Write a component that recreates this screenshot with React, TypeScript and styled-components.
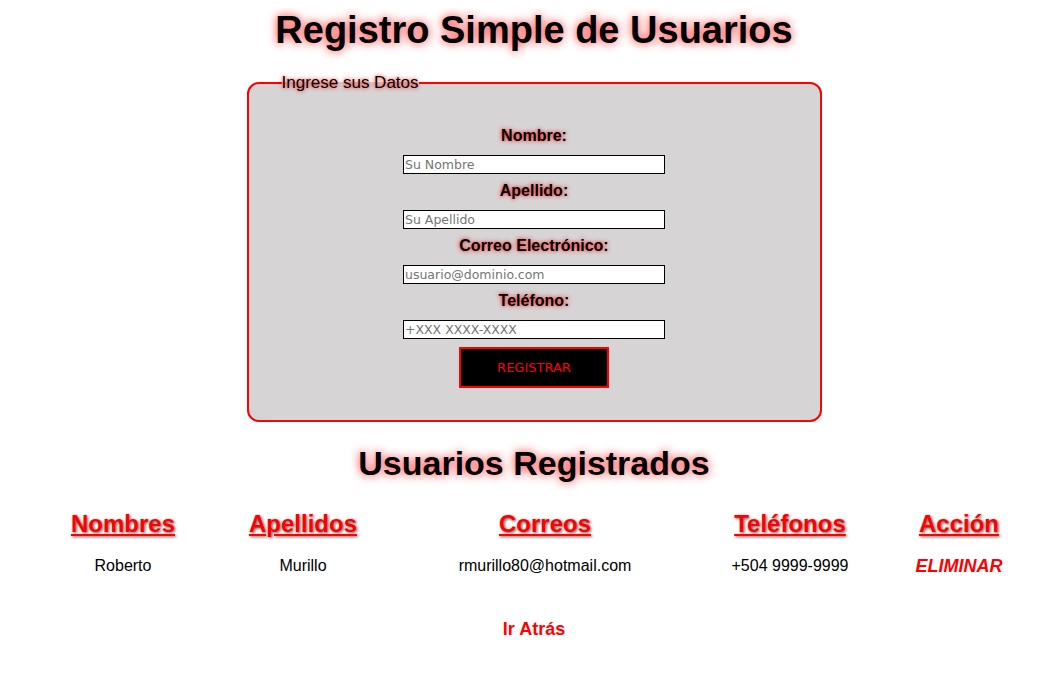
import React from "react";
import styled, { createGlobalStyle } from "styled-components";

const Global = createGlobalStyle`
  html, body { background: #fff; }
  body {
    margin: 8px;
    font-family: "Liberation Sans", Arial, sans-serif;
    color: #000;
  }
`;

const Page = styled.div`
  padding-left: 13px;
  display: flex;
  flex-direction: column;
  align-items: stretch;
`;

const Title = styled.h1<{ $size: number }>`
  margin: 0;
  text-align: center;
  font-size: ${(p) => p.$size}px;
  line-height: ${(p) => Math.round(p.$size * 1.16)}px;
  font-weight: bold;
  text-shadow: 0 0 10px rgba(255, 0, 0, 0.85);
`;

const Fieldset = styled.fieldset`
  box-sizing: border-box;
  width: 575px;
  margin: 21px auto 0;
  padding: 34px 0 32px;
  border: 2px solid #f00;
  border-radius: 12px;
  background: #d6d4d5;
`;

const Legend = styled.legend`
  margin-left: 33px;
  padding: 0;
  font-size: 17px;
  line-height: 20px;
  text-shadow: 0 0 4px #f00;
`;

const Form = styled.form`
  display: flex;
  flex-direction: column;
  align-items: center;
`;

const Label = styled.label`
  display: block;
  font-size: 16px;
  line-height: 18px;
  font-weight: bold;
  margin-bottom: 10px;
  text-shadow: 0 0 4px #f00;
`;

const Input = styled.input`
  box-sizing: border-box;
  width: 262px;
  height: 19px;
  margin: 0 0 8px;
  padding: 0 1px;
  border: 1px solid #000;
  background: #fff;
  font-family: "DejaVu Sans", Verdana, sans-serif;
  font-size: 12.5px;
  outline: none;
  &::placeholder {
    color: #757575;
  }
`;

const Button = styled.button`
  box-sizing: border-box;
  width: 150px;
  height: 41px;
  margin: 0;
  border: 2px solid #f00;
  background: #000;
  color: #f00;
  font-family: "DejaVu Sans", Verdana, sans-serif;
  font-size: 13px;
  cursor: pointer;
`;

const SubTitle = styled(Title)`
  margin-top: 22px;
`;

const Table = styled.div`
  display: grid;
  grid-template-columns: 204px 156px 328px 162px 1fr;
  margin-top: 27px;
`;

const Head = styled.div`
  text-align: center;
  font-size: 24px;
  line-height: 28px;
  font-weight: bold;
  color: #f00;
  text-decoration: underline;
  text-shadow: 1px 1px 3px #555;
`;

const Cell = styled.div<{ $danger?: boolean }>`
  margin-top: 19px;
  text-align: center;
  font-size: ${(p) => (p.$danger ? 18 : 16)}px;
  line-height: 18px;
  color: ${(p) => (p.$danger ? "#f00" : "#000")};
  font-weight: ${(p) => (p.$danger ? "bold" : "normal")};
  font-style: ${(p) => (p.$danger ? "italic" : "normal")};
`;

const Back = styled.a`
  display: block;
  margin-top: 44px;
  text-align: center;
  font-size: 18px;
  line-height: 21px;
  font-weight: bold;
  color: #f00;
  text-decoration: none;
`;

const fields = [
  { label: "Nombre:", ph: "Su Nombre" },
  { label: "Apellido:", ph: "Su Apellido" },
  { label: "Correo Electrónico:", ph: "usuario@dominio.com" },
  { label: "Teléfono:", ph: "+XXX XXXX-XXXX" },
];

export default function App() {
  return (
    <>
      <Global />
      <Page>
        <Title $size={38}>Registro Simple de Usuarios</Title>
        <Fieldset>
          <Legend>Ingrese sus Datos</Legend>
          <Form onSubmit={(e) => e.preventDefault()}>
            {fields.map((f) => (
              <React.Fragment key={f.label}>
                <Label>{f.label}</Label>
                <Input placeholder={f.ph} />
              </React.Fragment>
            ))}
            <Button type="submit">REGISTRAR</Button>
          </Form>
        </Fieldset>
        <SubTitle $size={34}>Usuarios Registrados</SubTitle>
        <Table>
          <Head>Nombres</Head>
          <Head>Apellidos</Head>
          <Head>Correos</Head>
          <Head>Teléfonos</Head>
          <Head>Acción</Head>
          <Cell>Roberto</Cell>
          <Cell>Murillo</Cell>
          <Cell>rmurillo80@hotmail.com</Cell>
          <Cell>+504 9999-9999</Cell>
          <Cell $danger>ELIMINAR</Cell>
        </Table>
        <Back href="#">Ir Atrás</Back>
      </Page>
    </>
  );
}
